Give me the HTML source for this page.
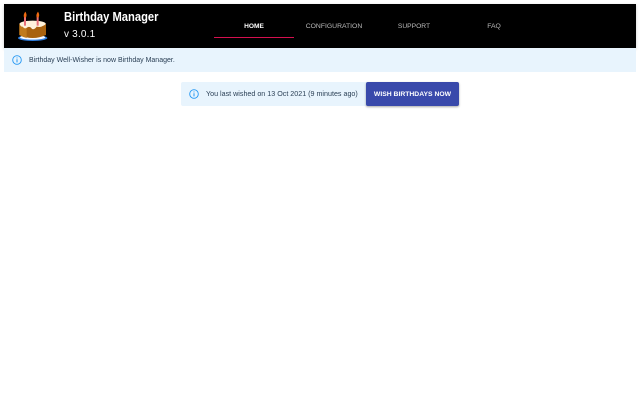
<!DOCTYPE html>
<html><head><meta charset="utf-8"><style>
html,body{margin:0;padding:0;background:#fff;width:640px;height:400px;overflow:hidden;font-family:"Liberation Sans",sans-serif}
.a{position:absolute;white-space:nowrap}
</style></head><body>
<div class="a" style="left:4px;top:4px;width:632px;height:44px;background:#000;box-shadow:0 1px 3px rgba(0,0,0,.2)"></div>
<div class="a" style="left:4px;top:48px;width:632px;height:24px;background:#e8f4fd"></div>
<svg class="a" style="left:10px;top:5px" width="50" height="40" viewBox="0 0 150 120">
<ellipse cx="68" cy="99" rx="44" ry="9" fill="#2f7fe0"/>
<ellipse cx="68" cy="97" rx="38" ry="7" fill="#f4f8ff"/>
<path d="M28 56V90Q68 108 108 90V56Z" fill="#a8620f"/>
<path d="M28 56V90Q38 96 50 99V56Z" fill="#c07a1c"/>
<ellipse cx="68" cy="56" rx="39" ry="9" fill="#fff3dc"/>
<path d="M29 56Q31 66 38 65Q44 74 52 67Q60 63 66 72Q74 75 80 65Q92 68 98 63Q106 60 107 56Z" fill="#fff3dc"/>
<rect x="42" y="36" width="6" height="26" fill="#e8707a"/>
<rect x="80" y="36" width="6" height="26" fill="#e8707a"/>
<path d="M46 20Q52 29 48 37H42Q39 29 46 20ZM84 20Q90 29 86 37H80Q77 29 84 20Z" fill="#f06a10"/>
</svg>
<div class="a" style="left:64px;top:10px;font-size:12.5px;line-height:15px;font-weight:bold;color:#fff;transform:scaleX(.895);transform-origin:left">Birthday Manager</div>
<div class="a" style="left:64px;top:28px;font-size:10px;line-height:14px;color:#fff;letter-spacing:.2px">v 3.0.1</div>
<div class="a" style="left:214px;top:22px;width:80px;text-align:center;font-size:6.6px;line-height:10px;font-weight:bold;color:#fff">HOME</div>
<div class="a" style="left:214px;top:37px;width:80px;height:1px;background:#d5104f"></div>
<div class="a" style="left:294px;top:22px;width:80px;text-align:center;font-size:6.8px;line-height:10px;color:#bbb">CONFIGURATION</div>
<div class="a" style="left:374px;top:22px;width:80px;text-align:center;font-size:6.7px;line-height:10px;color:#bbb">SUPPORT</div>
<div class="a" style="left:454px;top:22px;width:80px;text-align:center;font-size:6.8px;line-height:10px;color:#bbb">FAQ</div>
<svg class="a" style="left:12px;top:55px" width="10" height="10" viewBox="0 0 10 10" fill="none" stroke="#2196f3"><circle cx="5" cy="5" r="4.3" stroke-width=".9"/><path d="M5 4.3V7.4M5 2.5V3.4" stroke-width="1"/></svg>
<div class="a" style="left:29px;top:56px;font-size:7px;line-height:10px;color:#2a3f55">Birthday Well-Wisher is now Birthday Manager.</div>
<div class="a" style="left:181px;top:82px;width:190px;height:24px;background:#e8f4fd;border-radius:2px"></div>
<svg class="a" style="left:189px;top:89px" width="10" height="10" viewBox="0 0 10 10" fill="none" stroke="#2196f3"><circle cx="5" cy="5" r="4.3" stroke-width=".9"/><path d="M5 4.3V7.4M5 2.5V3.4" stroke-width="1"/></svg>
<div class="a" style="left:206px;top:89px;font-size:7.15px;line-height:10px;color:#2a3f55">You last wished on 13 Oct 2021 (9 minutes ago)</div>
<div class="a" style="left:366px;top:82px;width:93px;height:24px;background:#3949ab;border-radius:2px;box-shadow:0 1px 2px rgba(0,0,0,.35);text-align:center;font-size:6.8px;line-height:25px;font-weight:bold;color:#fff">WISH BIRTHDAYS NOW</div>
</body></html>
